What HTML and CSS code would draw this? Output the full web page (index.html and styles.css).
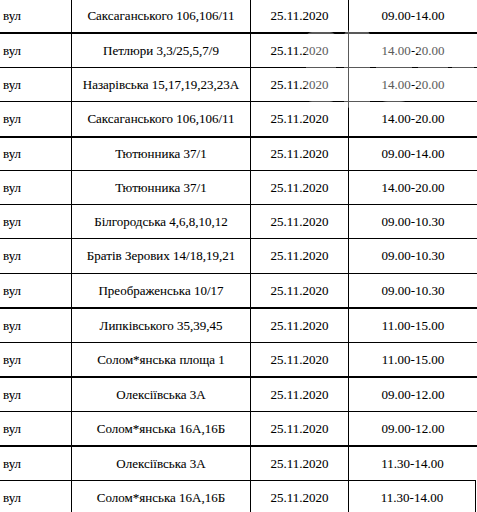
FILE: index.html
```html
<!DOCTYPE html>
<html lang="uk">
<head>
<meta charset="utf-8">
<link rel="stylesheet" href="styles.css">
</head>
<body>
<div class="sheet">
  <div class="row h34 thick"><div class="c type">вул</div><div class="c addr">Саксаганського 106,106/11</div><div class="c date">25.11.2020</div><div class="c time">09.00-14.00</div></div>
  <div class="row h34"><div class="c type">вул</div><div class="c addr">Петлюри 3,3/25,5,7/9</div><div class="c date">25.11.2020</div><div class="c time">14.00-20.00</div></div>
  <div class="row h34"><div class="c type">вул</div><div class="c addr">Назарівська 15,17,19,23,23А</div><div class="c date">25.11.2020</div><div class="c time">14.00-20.00</div></div>
  <div class="row h36 thick"><div class="c type">вул</div><div class="c addr">Саксаганського 106,106/11</div><div class="c date">25.11.2020</div><div class="c time">14.00-20.00</div></div>
  <div class="row h33"><div class="c type">вул</div><div class="c addr">Тютюнника 37/1</div><div class="c date">25.11.2020</div><div class="c time">09.00-14.00</div></div>
  <div class="row h34"><div class="c type">вул</div><div class="c addr">Тютюнника 37/1</div><div class="c date">25.11.2020</div><div class="c time">14.00-20.00</div></div>
  <div class="row h34"><div class="c type">вул</div><div class="c addr">Білгородська 4,6,8,10,12</div><div class="c date">25.11.2020</div><div class="c time">09.00-10.30</div></div>
  <div class="row h35"><div class="c type">вул</div><div class="c addr">Братів Зерових 14/18,19,21</div><div class="c date">25.11.2020</div><div class="c time">09.00-10.30</div></div>
  <div class="row h35 thick"><div class="c type">вул</div><div class="c addr">Преображенська 10/17</div><div class="c date">25.11.2020</div><div class="c time">09.00-10.30</div></div>
  <div class="row h34"><div class="c type">вул</div><div class="c addr">Липківського 35,39,45</div><div class="c date">25.11.2020</div><div class="c time">11.00-15.00</div></div>
  <div class="row h35 thick"><div class="c type">вул</div><div class="c addr">Солом*янська площа 1</div><div class="c date">25.11.2020</div><div class="c time">11.00-15.00</div></div>
  <div class="row h34"><div class="c type">вул</div><div class="c addr">Олексіївська 3А</div><div class="c date">25.11.2020</div><div class="c time">09.00-12.00</div></div>
  <div class="row h35 thick"><div class="c type">вул</div><div class="c addr">Солом*янська 16А,16Б</div><div class="c date">25.11.2020</div><div class="c time">09.00-12.00</div></div>
  <div class="row h34 short"><div class="c type">вул</div><div class="c addr">Олексіївська 3А</div><div class="c date">25.11.2020</div><div class="c time">11.30-14.00</div></div>
  <div class="row h34 last"><div class="c type">вул</div><div class="c addr">Солом*янська 16А,16Б</div><div class="c date">25.11.2020</div><div class="c time">11.30-14.00</div></div>
  <svg class="watermark" width="170" height="80" viewBox="0 0 170 80">
    <g fill="#fff" fill-opacity="0.35">
      <rect x="0" y="2" width="30" height="70" rx="6"/>
      <rect x="38" y="0" width="26" height="78" rx="6"/>
      <rect x="70" y="6" width="36" height="66" rx="12"/>
      <rect x="112" y="10" width="30" height="60" rx="10"/>
      <rect x="146" y="18" width="22" height="44" rx="8"/>
    </g>
  </svg>
</div>
</body>
</html>
```

FILE: styles.css
```css
html, body {
  margin: 0;
  padding: 0;
  background: #fff;
}

.sheet {
  position: relative;
  width: 477px;
  height: 512px;
  overflow: hidden;
  font-family: "Liberation Serif", "DejaVu Serif", serif;
  font-size: 13px;
  color: #000;
}

.row {
  display: grid;
  grid-template-columns: 72px 179px 98px 1fr;
  box-sizing: border-box;
  border-bottom: 1px solid #000;
}

.row.thick { border-bottom-width: 2px; }
.row.short { margin-right: 1px; }
.row.last {
  border-bottom: none;
  border-right: 1px solid #000;
  margin-right: 1px;
}

.h33 { height: 33px; }
.h34 { height: 34px; }
.h35 { height: 35px; }
.h36 { height: 36px; }

.c {
  display: flex;
  align-items: center;
  justify-content: center;
  border-right: 1px solid #000;
  white-space: nowrap;
  font-family: "Liberation Serif", "DejaVu Serif", serif;
  -webkit-text-stroke: 0.08px #000;
}

.c.type {
  justify-content: flex-start;
  padding-left: 3px;
}

.c.time { border-right: none; }

.watermark {
  position: absolute;
  left: 306px;
  top: 30px;
}
```
